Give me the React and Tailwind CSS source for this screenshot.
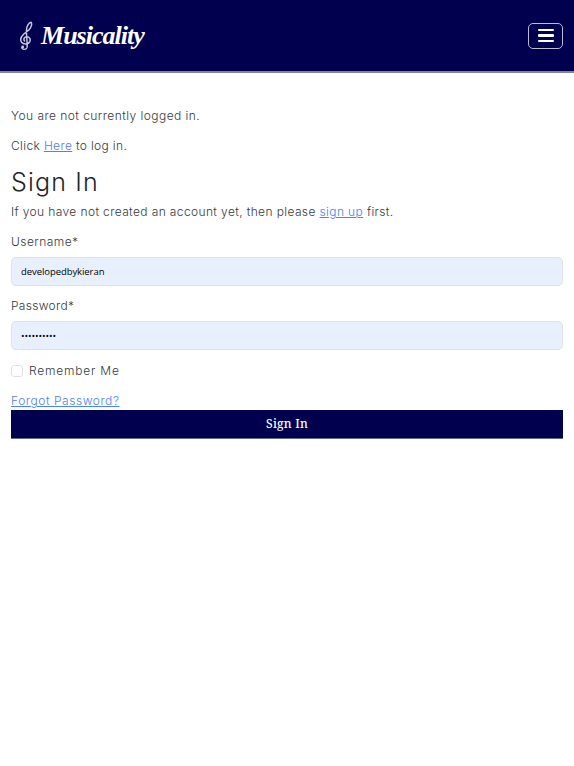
const link = "text-[#4d80fb] underline decoration-1 underline-offset-[1px]";

function TrebleClef() {
  return (
    <svg className="h-[30px] w-[14px]" viewBox="0 0 14 30" fill="none" stroke="#c6c6da" strokeLinecap="round">
      <path d="M8.200 25c.2 2.300-1.200 3.300-3 3.300-1.400 0-2.400-.8-2.500-1.900" strokeWidth="1.200" />
      <circle cx="3.700" cy="26" r="1.400" fill="#c6c6da" stroke="none" />
      <path d="M8.200 25 7.400 9.500C7.500 5 9.800 1.700 12 1.300c1.300 1.500.4 5.100-1.900 7.300L4.600 13.300C1.800 16 1 19 2.500 21.200c2 2.600 7 2.200 8.300-.6 1.100-2.700-.5-5.100-3-4.900-2.400.1-3.600 2.500-2.300 4.300" strokeWidth="1.500" />
    </svg>
  );
}

function Field({ label, type, value, spacing }) {
  return (
    <label className="mb-[10px] block">
      <span className={`block h-5 ${spacing}`}>{label}</span>
      <input
        type={type}
        defaultValue={value}
        className="mt-[5px] block h-[29px] w-full rounded-[5px] border border-[#dee2e6] bg-[#e8f0fe] px-[9px] font-['Open_Sans',sans-serif] text-[9.5px] font-normal tracking-[-0.07px] text-black outline-none"
      />
    </label>
  );
}

export default function App() {
  return (
    <div className="min-h-screen bg-white font-[Inter,sans-serif] text-[12px] leading-5 font-light text-[#353a40]">
      <header className="flex h-[73px] items-center justify-between border-b-2 border-[#85858a] bg-[#00004f] pr-[11px] pl-[19px]">
        <a className="flex items-center gap-[8px] text-white" href="#">
          <TrebleClef />
          <span className="font-['Liberation_Serif',serif] text-[26px] leading-9 font-bold tracking-[-0.980px] italic">Musicality</span>
        </a>
        <button className="flex h-[26px] w-[35px] flex-col items-center justify-center gap-[3px] rounded-[5px] border border-[#bcbcd0]" aria-label="Menu">
          <span className="h-[2.500px] w-4 rounded-[1px] bg-white" />
          <span className="h-[2.500px] w-4 rounded-[1px] bg-white" />
          <span className="h-[2.500px] w-4 rounded-[1px] bg-white" />
        </button>
      </header>
      <main className="px-[11px] pt-[33px]">
        <p className="mb-[10px] h-5 tracking-[0.450px]">You are not currently logged in.</p>
        <p className="mb-[10px] h-5 tracking-[0.350px]">
          Click <a href="#" className={link}>Here</a> to log in.
        </p>
        <h1 className="mb-[4px] h-8 text-[25px] leading-[33px] tracking-[1.150px] text-[#212529]">Sign In</h1>
        <p className="mb-[10px] h-5 tracking-[0.380px]">
          If you have not created an account yet, then please <a href="#" className={link}>sign up</a> first.
        </p>
        <form>
          <Field label="Username*" type="text" value="developedbykieran" spacing="tracking-[0.450px]" />
          <Field label="Password*" type="password" value="abcdefghij" spacing="tracking-[0.300px]" />
          <label className="mt-[11px] flex h-5 items-center tracking-[0.800px]">
            <input type="checkbox" className="mr-[6px] h-3 w-3 appearance-none rounded-[3px] border border-[#dee2e6] bg-white" />
            Remember Me
          </label>
          <a href="#" className={`mt-[10px] block h-[19px] w-fit tracking-[0.550px] ${link}`}>Forgot Password?</a>
          <button type="button" className="block h-[29px] w-full border-b border-[#66668c] bg-[#00004f] text-center font-['Noto_Serif','DejaVu_Serif',serif] text-[12px] font-medium tracking-[0.2px] text-white">
            Sign In
          </button>
        </form>
      </main>
    </div>
  );
}
